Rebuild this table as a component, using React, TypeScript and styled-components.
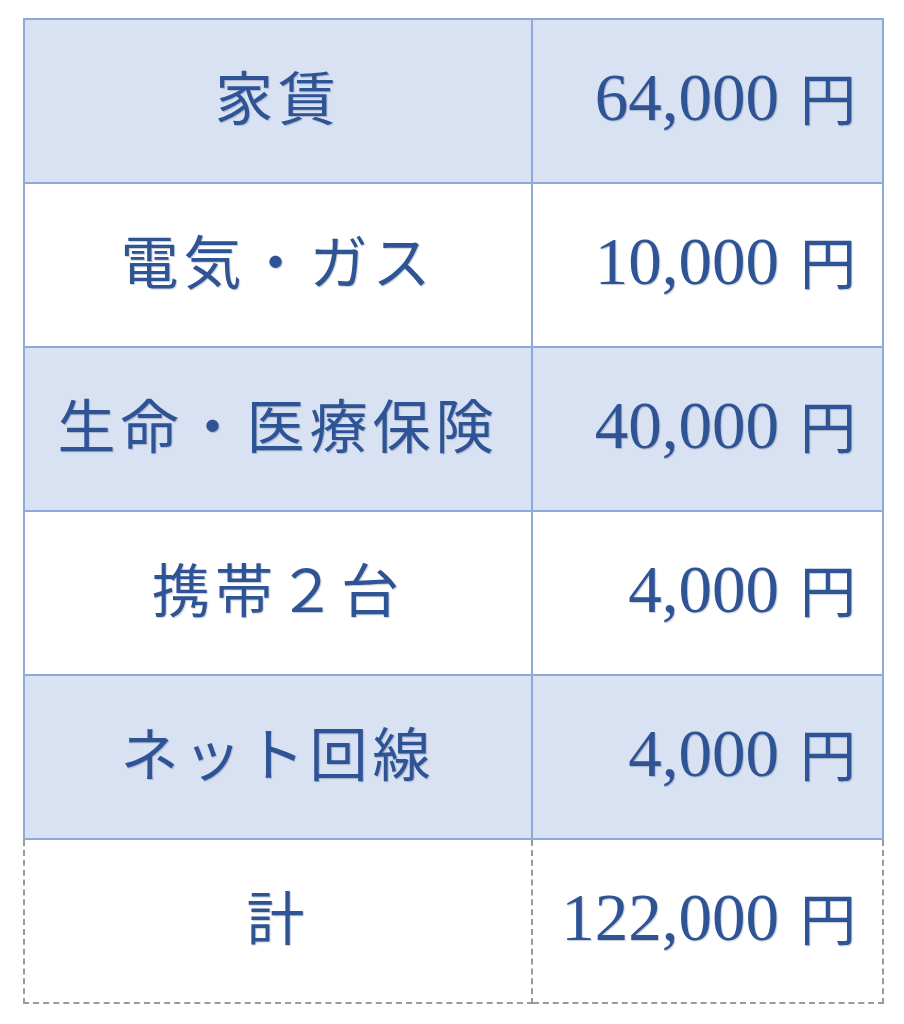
import React from "react";
import styled, { createGlobalStyle } from "styled-components";

const GlobalStyle = createGlobalStyle`
  html, body {
    margin: 0;
    padding: 0;
    background: #ffffff;
  }
  body {
    font-family: "Liberation Serif", "Noto Sans CJK JP", serif;
  }
`;

const Page = styled.div`
  padding: 18px 20px 20px 23px;
`;

const Table = styled.table`
  border-collapse: collapse;
  width: 861px;
  table-layout: fixed;
  color: #2f5496;
`;

const Row = styled.tr<{ $shaded?: boolean }>`
  height: 164px;
  background: ${(p) => (p.$shaded ? "#d9e2f3" : "#ffffff")};
`;

const Cell = styled.td<{ $dashed?: boolean }>`
  border: 2px ${(p) => (p.$dashed ? "dashed #9a9a9a" : "solid #8eaadb")};
  padding: 0 0 12px 0;
  vertical-align: middle;
  text-shadow: 1px 1px 1px rgba(30, 50, 90, 0.25);
`;

const LabelCell = styled(Cell)`
  width: 506px;
  text-align: center;
  font-family: "Noto Sans CJK JP", "Liberation Serif", sans-serif;
  font-size: 58px;
  letter-spacing: 5px;
  font-weight: 400;
`;

const AmountCell = styled(Cell)`
  text-align: right;
  padding-right: 26px;
  white-space: nowrap;
`;

const Number = styled.span`
  font-family: "Liberation Serif", serif;
  font-size: 67px;
`;

const Yen = styled.span`
  font-family: "Noto Sans CJK JP", sans-serif;
  font-size: 56px;
  margin-left: 21px;
`;

const rows = [
  { label: "家賃", amount: "64,000" },
  { label: "電気・ガス", amount: "10,000" },
  { label: "生命・医療保険", amount: "40,000" },
  { label: "携帯２台", amount: "4,000" },
  { label: "ネット回線", amount: "4,000" },
];

export default function App() {
  return (
    <Page>
      <GlobalStyle />
      <Table>
        <tbody>
          {rows.map((r, i) => (
            <Row key={r.label} $shaded={i % 2 === 0}>
              <LabelCell>{r.label}</LabelCell>
              <AmountCell>
                <Number>{r.amount}</Number>
                <Yen>円</Yen>
              </AmountCell>
            </Row>
          ))}
          <Row>
            <LabelCell $dashed>計</LabelCell>
            <AmountCell $dashed>
              <Number>122,000</Number>
              <Yen>円</Yen>
            </AmountCell>
          </Row>
        </tbody>
      </Table>
    </Page>
  );
}
